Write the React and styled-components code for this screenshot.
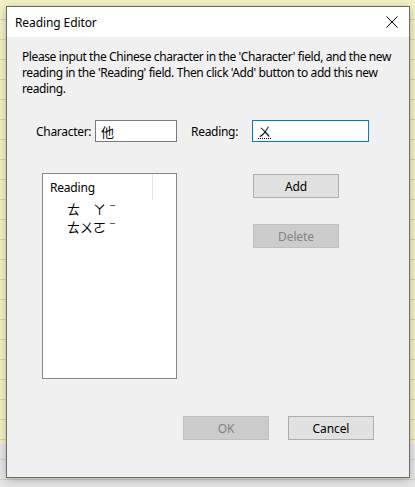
import React from "react";
import styled, { createGlobalStyle } from "styled-components";

const GlobalStyle = createGlobalStyle`
  html, body {
    margin: 0;
    padding: 0;
  }
  body {
    width: 415px;
    height: 487px;
    overflow: hidden;
    font-family: "Noto Sans", "Noto Sans CJK TC", sans-serif;
    background:
      repeating-linear-gradient(
        to bottom,
        transparent 0,
        transparent 19px,
        rgba(200, 200, 170, 0.7) 19px,
        rgba(200, 200, 170, 0.7) 20px
      ),
      linear-gradient(to bottom, #f1f1c3 0, #f1f1c3 444px, #e6e6e6 444px);
  }
`;

const Desktop = styled.div`
  padding: 6px 0 0 6px;
`;

const Window = styled.div`
  width: 402px;
  height: 470px;
  border: 1px solid #6a6a6a;
  background: #f0f0f0;
  box-shadow: 0 2px 8px rgba(0, 0, 0, 0.25);
  display: flex;
  flex-direction: column;
  font-size: 12px;
  color: #000;
`;

const TitleBar = styled.div`
  height: 30px;
  background: #fff;
  display: flex;
  align-items: center;
  justify-content: space-between;
  padding: 0 10px 0 8px;
`;

const Title = styled.span`
  font-size: 12px;
  letter-spacing: -0.1px;
`;

const CloseIcon = styled.svg`
  width: 12px;
  height: 12px;
  margin-right: 1px;
`;

const Body = styled.div`
  flex: 1;
  display: flex;
  flex-direction: column;
  padding: 12px 0 0 15px;
`;

const Intro = styled.p`
  margin: 0;
  width: 375px;
  line-height: 16px;
  font-size: 12px;
  letter-spacing: -0.4px;
`;

const FieldRow = styled.div`
  display: flex;
  align-items: center;
  margin-top: 23px;
  padding-left: 14px;
`;

const Label = styled.span`
  width: ${(p) => p.$w}px;
  letter-spacing: -0.3px;
`;

const TextBox = styled.div`
  width: ${(p) => p.$w}px;
  height: 22px;
  box-sizing: border-box;
  background: #fff;
  border: 1px solid ${(p) => (p.$focus ? "#0078d7" : "#7a7a7a")};
  margin-right: ${(p) => p.$mr || 0}px;
  display: flex;
  align-items: center;
  padding-left: 5px;
  font-family: "Noto Sans CJK TC", sans-serif;
  font-size: 13px;
`;

const Composing = styled.span`
  border-bottom: 1px dotted #000;
  line-height: 14px;
`;

const Middle = styled.div`
  display: flex;
  margin-top: 31px;
  padding-left: 20px;
`;

const ListBox = styled.div`
  width: 135px;
  height: 206px;
  box-sizing: border-box;
  background: #fff;
  border: 1px solid #828790;
  margin-right: 76px;
`;

const ListHeader = styled.div`
  height: 26px;
  display: flex;
  align-items: center;
`;

const HeaderCell = styled.div`
  width: 110px;
  height: 100%;
  box-sizing: border-box;
  padding-left: 7px;
  display: flex;
  align-items: center;
  border-right: 1px solid #e5e5e5;
  letter-spacing: -0.2px;
`;

const ListItem = styled.div`
  height: 18px;
  line-height: 18px;
  padding-left: 24px;
  font-family: "Noto Sans CJK TC", sans-serif;
  font-size: 13px;
  white-space: pre;
`;

const ButtonColumn = styled.div`
  display: flex;
  flex-direction: column;
  gap: 26px;
  padding-top: 1px;
`;

const Button = styled.div`
  width: 86px;
  height: 24px;
  box-sizing: border-box;
  display: flex;
  align-items: center;
  justify-content: center;
  background: ${(p) => (p.$disabled ? "#cccccc" : "#e1e1e1")};
  border: 1px solid ${(p) => (p.$disabled ? "#bfbfbf" : "#adadad")};
  color: ${(p) => (p.$disabled ? "#838383" : "#000")};
  letter-spacing: -0.1px;
`;

const Footer = styled.div`
  display: flex;
  gap: 19px;
  margin-top: 37px;
  padding-left: 161px;
`;

export default function App() {
  return (
    <>
      <GlobalStyle />
      <Desktop>
        <Window>
          <TitleBar>
            <Title>Reading Editor</Title>
            <CloseIcon viewBox="0 0 12 12">
              <path d="M0.5 0.5 L11.5 11.5 M11.5 0.5 L0.5 11.5" stroke="#000" strokeWidth="1" fill="none" />
            </CloseIcon>
          </TitleBar>
          <Body>
            <Intro>
              Please input the Chinese character in the 'Character' field, and the new reading in the
              'Reading' field. Then click 'Add' button to add this new reading.
            </Intro>
            <FieldRow>
              <Label $w={59}>Character:</Label>
              <TextBox $w={82} $mr={14}>他</TextBox>
              <Label $w={61}>Reading:</Label>
              <TextBox $w={117} $focus>
                <Composing>ㄨ</Composing>
              </TextBox>
            </FieldRow>
            <Middle>
              <ListBox>
                <ListHeader>
                  <HeaderCell>Reading</HeaderCell>
                </ListHeader>
                <ListItem>ㄊ　ㄚˉ</ListItem>
                <ListItem>ㄊㄨㄛˉ</ListItem>
              </ListBox>
              <ButtonColumn>
                <Button>Add</Button>
                <Button $disabled>Delete</Button>
              </ButtonColumn>
            </Middle>
            <Footer>
              <Button $disabled>OK</Button>
              <Button>Cancel</Button>
            </Footer>
          </Body>
        </Window>
      </Desktop>
    </>
  );
}
